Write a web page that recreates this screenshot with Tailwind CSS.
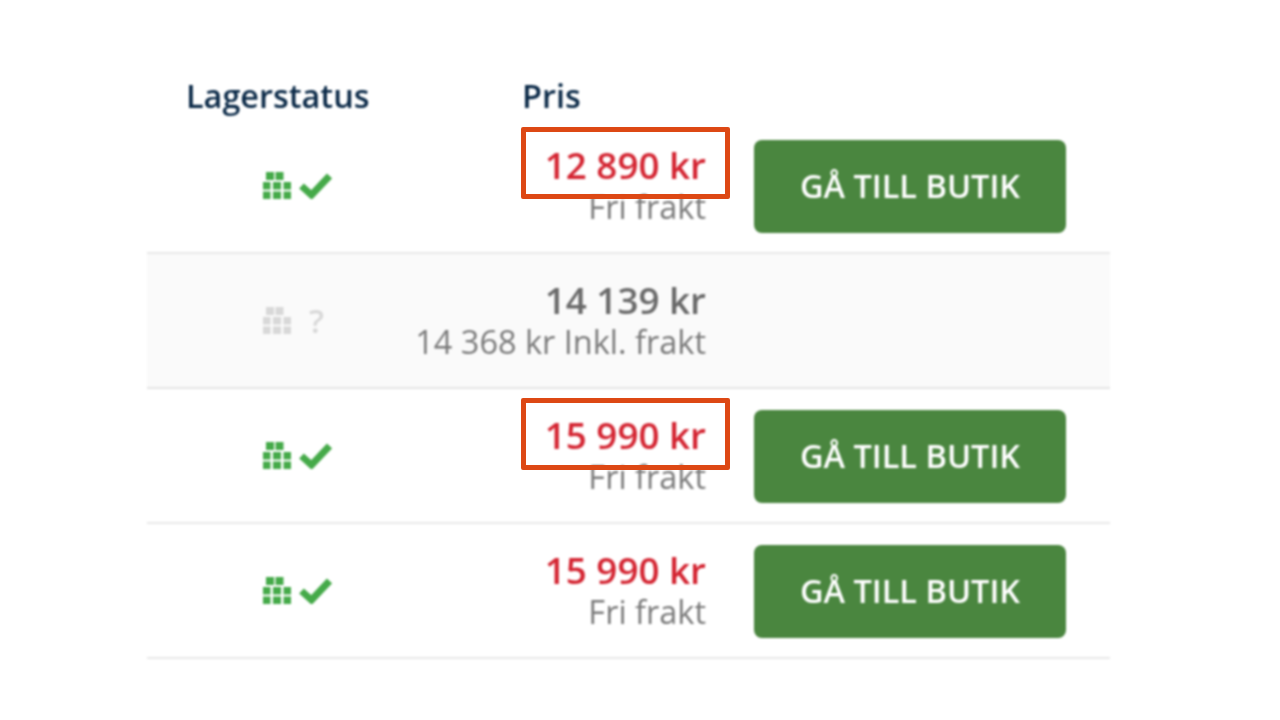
<!DOCTYPE html>
<html><head><meta charset="utf-8"><script src="https://cdn.jsdelivr.net/npm/@tailwindcss/browser@4"></script></head>
<body class="bg-white">
<div class="w-[1280px] h-[720px] overflow-hidden relative font-['Open_Sans',sans-serif]">
<div class="w-full h-full pl-[147px] pt-[74px] blur-[0.8px]">
  <div class="w-[963px]">
    <div class="flex h-[43px] mb-[2px] items-center text-[32.400px] font-semibold text-[#0b2a48]">
      <div class="w-[376px] pl-[39px]">Lagerstatus</div>
      <div class="-ml-[1px]">Pris</div>
    </div>
    <div class="flex items-center h-[135px] border-b-2 border-[#e8e8e8] bg-white">
      <div class="w-[300px] flex justify-center"><div class="flex items-center gap-[8px]">
        <svg class="w-[28px] h-[27px] text-[#45aa49]" viewBox="0 0 28 27" fill="currentColor"><path d="M3 0h8v8H3zM12.500 0h8v8h-8zM0 10h7.500v7.500H0zM10 10h8v7.500h-8zM20.500 10H28v7.500h-7.500zM0 19.500h7.500V27H0zM10 19.500h8V27h-8zM20.500 19.500H28V27h-7.500z"/></svg>
        <svg class="w-[33px] h-[26px] text-[#45aa49]" viewBox="0 0 33 26" fill="none" stroke="currentColor" stroke-width="7"><path d="M2.500 13l10 9L30.500 3"/></svg>
      </div></div>
      <div class="w-[259px] text-right">
        <div class="text-[36.800px] leading-[40px] mb-[2px] font-semibold text-[#d42532]">12 890 kr</div>
        <div class="text-[32.500px] leading-[40px] text-[#7a7a7a]">Fri frakt</div>
      </div>
      <div class="ml-[48px] mt-[2px] w-[312px] h-[93px] bg-[#4a863f] rounded-[8px] flex items-center justify-center text-white text-[32.500px] font-semibold">GÅ TILL BUTIK</div>
    </div>
    <div class="flex items-center h-[135px] border-b-2 border-[#e4e4e4] bg-[#fafafa]">
      <div class="w-[300px] flex justify-center"><div class="flex items-center gap-[18px] pl-[1px]">
        <svg class="w-[28px] h-[27px] text-[#d8d8d8]" viewBox="0 0 28 27" fill="currentColor"><path d="M3 0h8v8H3zM12.500 0h8v8h-8zM0 10h7.500v7.500H0zM10 10h8v7.500h-8zM20.500 10H28v7.500h-7.500zM0 19.500h7.500V27H0zM10 19.500h8V27h-8zM20.500 19.500H28V27h-7.500z"/></svg>
        <span class="text-[33px] leading-none font-semibold text-[#d8d8d8] w-[23px]">?</span>
      </div></div>
      <div class="w-[259px] text-right whitespace-nowrap">
        <div class="text-[36.800px] leading-[40px] mb-[2px] font-semibold text-[#6a6a6a]">14 139 kr</div>
        <div class="text-[32.500px] leading-[40px] text-[#7a7a7a] -ml-[100px]">14 368 kr Inkl. frakt</div>
      </div>
    </div>
    <div class="flex items-center h-[135px] border-b-2 border-[#e8e8e8] bg-white">
      <div class="w-[300px] flex justify-center"><div class="flex items-center gap-[8px]">
        <svg class="w-[28px] h-[27px] text-[#45aa49]" viewBox="0 0 28 27" fill="currentColor"><path d="M3 0h8v8H3zM12.500 0h8v8h-8zM0 10h7.500v7.500H0zM10 10h8v7.500h-8zM20.500 10H28v7.500h-7.500zM0 19.500h7.500V27H0zM10 19.500h8V27h-8zM20.500 19.500H28V27h-7.500z"/></svg>
        <svg class="w-[33px] h-[26px] text-[#45aa49]" viewBox="0 0 33 26" fill="none" stroke="currentColor" stroke-width="7"><path d="M2.500 13l10 9L30.500 3"/></svg>
      </div></div>
      <div class="w-[259px] text-right">
        <div class="text-[36.800px] leading-[40px] mb-[2px] font-semibold text-[#d42532]">15 990 kr</div>
        <div class="text-[32.500px] leading-[40px] text-[#7a7a7a]">Fri frakt</div>
      </div>
      <div class="ml-[48px] mt-[2px] w-[312px] h-[93px] bg-[#4a863f] rounded-[8px] flex items-center justify-center text-white text-[32.500px] font-semibold">GÅ TILL BUTIK</div>
    </div>
    <div class="flex items-center h-[135px] border-b-2 border-[#e8e8e8] bg-white">
      <div class="w-[300px] flex justify-center"><div class="flex items-center gap-[8px]">
        <svg class="w-[28px] h-[27px] text-[#45aa49]" viewBox="0 0 28 27" fill="currentColor"><path d="M3 0h8v8H3zM12.500 0h8v8h-8zM0 10h7.500v7.500H0zM10 10h8v7.500h-8zM20.500 10H28v7.500h-7.500zM0 19.500h7.500V27H0zM10 19.500h8V27h-8zM20.500 19.500H28V27h-7.500z"/></svg>
        <svg class="w-[33px] h-[26px] text-[#45aa49]" viewBox="0 0 33 26" fill="none" stroke="currentColor" stroke-width="7"><path d="M2.500 13l10 9L30.500 3"/></svg>
      </div></div>
      <div class="w-[259px] text-right">
        <div class="text-[36.800px] leading-[40px] mb-[2px] font-semibold text-[#d42532]">15 990 kr</div>
        <div class="text-[32.500px] leading-[40px] text-[#7a7a7a]">Fri frakt</div>
      </div>
      <div class="ml-[48px] mt-[2px] w-[312px] h-[93px] bg-[#4a863f] rounded-[8px] flex items-center justify-center text-white text-[32.500px] font-semibold">GÅ TILL BUTIK</div>
    </div>
  </div>
</div>
  <div class="absolute left-[521px] top-[127px] w-[209px] h-[72px] border-[5px] border-[#dd4814] rounded-[2px]"></div>
  <div class="absolute left-[521px] top-[398px] w-[209px] h-[72px] border-[5px] border-[#dd4814] rounded-[2px]"></div>
</div>
</body></html>
